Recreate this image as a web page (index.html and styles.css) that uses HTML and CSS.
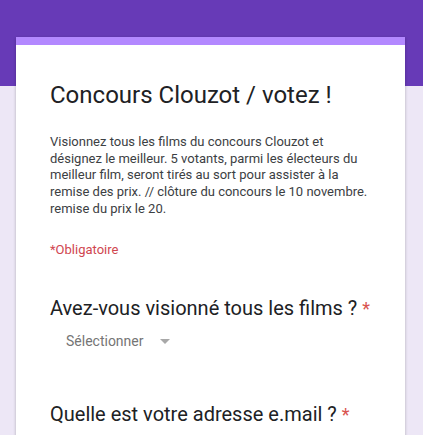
FILE: index.html
```html
<!DOCTYPE html>
<html lang="fr">
<head>
    <meta charset="UTF-8">
    <meta name="viewport" content="width=device-width, initial-scale=1.0">
    <title>Concours Clouzot / votez !</title>
    <link rel="stylesheet" href="styles.css">
</head>
<body>
    <div class="form-card">
        <div class="form-header">
            <h1 class="form-title">Concours Clouzot / votez !</h1>
            <div class="form-desc">
                Visionnez tous les films du concours Clouzot et désignez le meilleur. 5 votants, parmi les électeurs du meilleur film, seront tirés au sort pour assister à la remise des prix. // clôture du concours le 10 novembre. remise du prix le 20.
            </div>
            <div class="required-note">*Obligatoire</div>
        </div>

        <div class="question">
            <div class="question-title">Avez-vous visionné tous les films ? <span class="star">*</span></div>
            <div class="select">
                <span class="select-label">Sélectionner</span>
                <span class="select-arrow"></span>
            </div>
        </div>

        <div class="question question-next">
            <div class="question-title">Quelle est votre adresse e.mail ? <span class="star">*</span></div>
        </div>
    </div>
</body>
</html>
```

FILE: styles.css
```css
body {
    margin: 0;
    min-height: 435px;
    font-family: Roboto, "Liberation Sans", Arial, sans-serif;
    color: #202124;
    background: linear-gradient(#673ab7 0, #673ab7 86px, #ede7f6 86px);
    overflow: hidden;
}

.form-card {
    width: 389px;
    margin: 37px 0 0 16px;
    background: #fff;
    border-top: 8px solid #b388ff;
    box-shadow: 0 1px 3px rgba(0, 0, 0, 0.25);
    padding: 34px 30px 40px 34px;
    box-sizing: border-box;
    min-height: 420px;
}

.form-title {
    margin: 0;
    font-size: 24px;
    font-weight: 400;
    line-height: 32px;
    color: #202124;
}

.form-desc {
    margin-top: 23px;
    font-size: 13px;
    line-height: 16.7px;
    color: #3c4043;
}

.required-note {
    margin-top: 24px;
    font-size: 13px;
    line-height: 16.7px;
    color: #d04650;
}

.question {
    margin-top: 38px;
}

.question-next {
    margin-top: 51px;
}

.question-title {
    font-size: 20px;
    line-height: 24px;
    color: #202124;
}

.star {
    color: #d9534f;
    font-size: 18px;
}

.select {
    display: flex;
    align-items: center;
    margin-top: 10px;
    padding-left: 16px;
    height: 20px;
}

.select-label {
    font-size: 14px;
    line-height: 20px;
    color: #757575;
}

.select-arrow {
    margin-left: 16px;
    margin-top: 1px;
    width: 0;
    height: 0;
    border-left: 5px solid transparent;
    border-right: 5px solid transparent;
    border-top: 5px solid #a8a8a8;
}
```
